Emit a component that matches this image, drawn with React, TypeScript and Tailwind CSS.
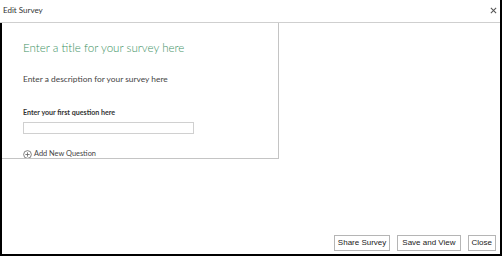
import React from "react";

export default function App() {
  return (
    <div className="w-[502px] h-[256px] bg-white flex flex-col border-r-2 border-b-2 border-black" style={{ fontFamily: 'Lato, "Open Sans", sans-serif' }}>
      <div className="h-[23px] shrink-0 flex items-start justify-between border-b border-[#cfcfcf] pl-[3px] pr-[3px]">
        <span className="text-[8px] leading-[10px] mt-[5px] text-[#333]">Edit Survey</span>
        <svg width="7" height="7" viewBox="0 0 8 8" className="mt-[7px]">
          <path d="M1 1 L7 7 M7 1 L1 7" stroke="#555" strokeWidth="1.2" />
        </svg>
      </div>
      <div className="flex-1 flex flex-col border-l-2 border-black">
        <div className="w-[277px] h-[136px] border-r border-b border-[#c4c4c4] overflow-hidden pl-[21px] shrink-0">
          <div className="mt-[16px] text-[11.6px] leading-[18px] font-light text-[#3d9163]">Enter a title for your survey here</div>
          <div className="mt-[17px] text-[8.4px] leading-[11px] text-[#444]">Enter a description for your survey here</div>
          <div className="mt-[23px] text-[7.1px] leading-[9px] font-bold text-[#333]">Enter your first question here</div>
          <div className="mt-[5px] w-[171px] h-[12px] border border-[#d0d0d0] bg-white" />
          <div className="mt-[15px] flex items-center gap-[2px] text-[#444]">
            <svg width="9" height="9" viewBox="0 0 10 10">
              <circle cx="5" cy="5" r="4.3" fill="none" stroke="#666" strokeWidth="0.9" />
              <path d="M5 2.6 V7.4 M2.6 5 H7.4" stroke="#666" strokeWidth="0.9" />
            </svg>
            <span className="text-[7.4px] leading-[10px]">Add New Question</span>
          </div>
        </div>
        <div className="flex-1" />
        <div className="flex justify-end gap-[7px] pr-[4px] pb-[3px]" style={{ fontFamily: '"Liberation Sans", Arial, sans-serif' }}>
          <button className="h-[16px] px-[3px] border border-[#b5b5b5] bg-white text-[8px] leading-[14px] text-[#222]">Share Survey</button>
          <button className="h-[16px] px-[4px] border border-[#b5b5b5] bg-white text-[8px] leading-[14px] text-[#222]">Save and View</button>
          <button className="h-[16px] px-[3px] border border-[#b5b5b5] bg-white text-[8px] leading-[14px] text-[#222]">Close</button>
        </div>
      </div>
    </div>
  );
}
